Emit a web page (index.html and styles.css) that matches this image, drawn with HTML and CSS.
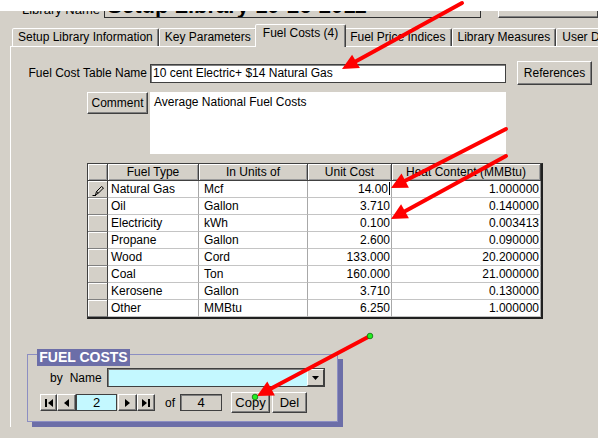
FILE: index.html
```html
<!DOCTYPE html>
<html lang="en">
<head>
<meta charset="utf-8">
<title>Fuel Costs</title>
<link rel="stylesheet" href="styles.css">
</head>
<body>
<div class="page">
  <div class="doc-top"></div>
  <div class="window">
    <div class="libname-clip">
      <div class="libname-row">
        <span class="libname-label">Library Name</span>
        <div class="libname-input">Setup Library 10-26-2011</div>
        <div class="libname-btn"></div>
      </div>
    </div>

    <div class="tabs">
      <div class="tab">Setup Library Information</div>
      <div class="tab">Key Parameters</div>
      <div class="tab active">Fuel Costs (4)</div>
      <div class="tab">Fuel Price Indices</div>
      <div class="tab">Library Measures</div>
      <div class="tab">User Defined</div>
    </div>

    <div class="panel">
      <div class="name-row">
        <span class="name-label">Fuel Cost Table Name</span>
        <div class="textbox name-box">10 cent Electric+ $14 Natural Gas</div>
        <button class="btn refs">References</button>
      </div>

      <div class="comment-row">
        <div class="comment-cell"><button class="btn comment-btn">Comment</button></div>
        <div class="comment-box">Average National Fuel Costs</div>
      </div>

      <table class="grid">
        <colgroup>
          <col class="c-sel"><col class="c-type"><col class="c-unit"><col class="c-cost"><col class="c-heat">
        </colgroup>
        <thead>
          <tr><th></th><th>Fuel Type</th><th>In Units of</th><th>Unit Cost</th><th>Heat Content (MMBtu)</th></tr>
        </thead>
        <tbody>
          <tr>
            <td class="sel"><svg class="pencil" width="13" height="11" viewBox="0 0 13 11"><path d="M0.5 10.5h3.5" stroke="#000" fill="none"/><path d="M3.5 10 4.5 6.5 9.5 1.5 11.5 3 6.5 8Z" stroke="#000" fill="none"/><path d="M4.5 6.5 6.5 8" stroke="#000"/></svg></td>
            <td class="txt">Natural Gas</td><td class="unit">Mcf</td><td class="num">14.00<span class="caret"></span></td><td class="num">1.000000</td>
          </tr>
          <tr><td class="sel"></td><td class="txt">Oil</td><td class="unit">Gallon</td><td class="num">3.710</td><td class="num">0.140000</td></tr>
          <tr><td class="sel"></td><td class="txt">Electricity</td><td class="unit">kWh</td><td class="num">0.100</td><td class="num">0.003413</td></tr>
          <tr><td class="sel"></td><td class="txt">Propane</td><td class="unit">Gallon</td><td class="num">2.600</td><td class="num">0.090000</td></tr>
          <tr><td class="sel"></td><td class="txt">Wood</td><td class="unit">Cord</td><td class="num">133.000</td><td class="num">20.200000</td></tr>
          <tr><td class="sel"></td><td class="txt">Coal</td><td class="unit">Ton</td><td class="num">160.000</td><td class="num">21.000000</td></tr>
          <tr><td class="sel"></td><td class="txt">Kerosene</td><td class="unit">Gallon</td><td class="num">3.710</td><td class="num">0.130000</td></tr>
          <tr><td class="sel"></td><td class="txt">Other</td><td class="unit">MMBtu</td><td class="num">6.250</td><td class="num">1.000000</td></tr>
        </tbody>
      </table>

      <div class="group">
        <div class="group-title">FUEL COSTS</div>
        <div class="by-row">
          <span class="by-label"><span>by</span><span class="by-name">Name</span></span>
          <div class="combo">
            <div class="combo-btn"><svg width="7" height="4" viewBox="0 0 7 4"><path d="M0 0h7L3.5 4Z" fill="#000"/></svg></div>
          </div>
        </div>
        <div class="nav-row">
          <button class="btn nav w17"><svg width="8" height="8" viewBox="0 0 8 8"><rect x="0" y="0" width="2" height="8" fill="#000"/><path d="M8 0v8L3 4Z" fill="#000"/></svg></button>
          <button class="btn nav w19"><svg width="5" height="8" viewBox="0 0 5 8"><path d="M5 0v8L0 4Z" fill="#000"/></svg></button>
          <div class="rec-box">2</div>
          <button class="btn nav w19 gap1"><svg width="5" height="8" viewBox="0 0 5 8"><path d="M0 0v8L5 4Z" fill="#000"/></svg></button>
          <button class="btn nav w18"><svg width="8" height="8" viewBox="0 0 8 8"><path d="M0 0v8L5 4Z" fill="#000"/><rect x="6" y="0" width="2" height="8" fill="#000"/></svg></button>
          <span class="of">of</span>
          <div class="count-box">4</div>
          <button class="btn copy">Copy</button>
          <button class="btn del">Del</button>
        </div>
      </div>
    </div>
  </div>

  <svg class="annot" width="598" height="438" viewBox="0 0 598 438">
    <g stroke="#ff0000" stroke-width="4" stroke-linecap="round" fill="none">
      <line x1="462" y1="3" x2="356" y2="61.3"/>
      <line x1="506" y1="129" x2="405.2" y2="180.7"/>
      <line x1="506" y1="156" x2="405" y2="211.3"/>
      <line x1="370" y1="336" x2="271.1" y2="388.5"/>
    </g>
    <g fill="#ff0000">
      <polygon points="342,69 359.9,67.9 352.1,54.7"/>
      <polygon points="391,188 408.9,187.8 401.5,173.6"/>
      <polygon points="391,219 408.9,218.3 401.1,204.3"/>
      <polygon points="257,396 274.9,395.6 267.3,381.4"/>
    </g>
    <g fill="#22ee22" stroke="#107010" stroke-width="0.8">
      <circle cx="370" cy="336" r="2.8"/>
      <circle cx="255" cy="397" r="2.8"/>
    </g>
  </svg>
</div>
</body>
</html>
```
FILE: styles.css
```css
* { box-sizing: border-box; }

html, body {
  margin: 0;
  padding: 0;
  background: #fff;
}

body {
  font-family: "Liberation Sans", Arial, sans-serif;
  font-size: 12px;
  color: #000;
}

.page {
  position: relative;
  width: 598px;
  height: 438px;
  overflow: hidden;
}

.doc-top {
  height: 11px;
  background: #fff;
}

.window {
  height: 427px;
  background: #d4d0c8;
  padding-left: 10px;
  overflow: hidden;
}

/* library name strip, only its lower edge shows */
.libname-clip {
  height: 7px;
  overflow: hidden;
}

.libname-row {
  display: flex;
  align-items: flex-end;
  height: 26px;
  margin-top: -19px;
  white-space: nowrap;
}

.libname-label {
  width: 100px;
  padding-left: 12px;
  margin-bottom: 1px;
  font-size: 13px;
  line-height: 15px;
  overflow: hidden;
}

.libname-input {
  width: 403px;
  height: 26px;
  padding: 2px 0 0 2px;
  border: 1px solid #303030;
  background: #d4d0c8;
  font-size: 22px;
  font-weight: bold;
  line-height: 22px;
  overflow: hidden;
}

.libname-btn {
  flex: none;
  width: 100px;
  height: 26px;
  margin-left: 17px;
  border: 1px solid;
  border-color: #fff #404040 #404040 #fff;
  box-shadow: inset 0 -1px 0 #808080;
}

/* tab strip */
.tabs {
  display: flex;
  align-items: flex-end;
  height: 22px;
  margin: 6px 0 0 2px;
  white-space: nowrap;
}

.tab {
  flex: none;
  height: 18px;
  padding: 0 5px;
  line-height: 16px;
  border: 1px solid;
  border-bottom: 0;
  border-color: #fff #404040 transparent #fff;
  border-radius: 2px 2px 0 0;
  box-shadow: inset -1px 0 0 #808080;
  background: #d4d0c8;
}

.tab.active {
  position: relative;
  z-index: 1;
  height: 23px;
  margin: 0 -2px -1px;
  padding: 0 7px;
}

.panel {
  height: 381px;
  border-top: 1px solid #fff;
  border-left: 1px solid #fff;
}

/* buttons and fields */
.btn {
  display: flex;
  align-items: center;
  justify-content: center;
  flex: none;
  padding: 0;
  margin: 0;
  font: inherit;
  color: #000;
  background: #d4d0c8;
  border: 1px solid;
  border-color: #fff #404040 #404040 #fff;
  box-shadow: inset -1px -1px 0 #808080;
}

.textbox {
  background: #fff;
  border: 1px solid #404040;
  box-shadow: inset 1px 1px 0 #808080;
}

.name-row {
  display: flex;
  align-items: center;
  height: 24px;
  margin-top: 14px;
}

.name-label {
  width: 139px;
  padding-right: 3px;
  text-align: right;
  white-space: nowrap;
}

.name-box {
  width: 356px;
  height: 19px;
  padding-left: 2px;
  line-height: 17px;
  white-space: nowrap;
}

.refs {
  width: 75px;
  height: 24px;
  margin-left: 11px;
}

.comment-row {
  display: flex;
  margin-top: 7px;
}

.comment-cell {
  display: flex;
  justify-content: flex-end;
  width: 139px;
  padding-right: 2px;
}

.comment-btn {
  width: 61px;
  height: 22px;
}

.comment-box {
  width: 356px;
  height: 62px;
  padding: 3px 4px;
  line-height: 14px;
  background: #fff;
}

/* fuel grid */
.grid {
  margin: 9px 0 0 76px;
  width: 456px;
  table-layout: fixed;
  border-collapse: separate;
  border-spacing: 0;
  border-top: 1px solid #404040;
  border-left: 1px solid #404040;
  border-right: 2px solid #202020;
  border-bottom: 2px solid #202020;
}

.c-sel { width: 20px; }
.c-type { width: 91px; }
.c-unit { width: 109px; }
.c-cost { width: 84px; }
.c-heat { width: 149px; }

.grid th {
  padding: 0;
  font-weight: normal;
  line-height: 16px;
  text-align: center;
  white-space: nowrap;
  overflow: hidden;
  background: #d4d0c8;
  border-right: 1px solid #404040;
  border-bottom: 1px solid #404040;
  box-shadow: inset 1px 1px 0 #fff, inset -1px -1px 0 #9a9a9a;
}

.grid td {
  padding: 0 3px;
  line-height: 16px;
  white-space: nowrap;
  overflow: hidden;
  background: #fff;
  border-right: 1px solid #a8a8a8;
  border-bottom: 1px solid #c4c4c4;
}

.grid td.sel {
  padding: 0;
  text-align: center;
  background: #d4d0c8;
  border-right: 1px solid #404040;
  border-bottom: 1px solid #808080;
  box-shadow: inset 1px 1px 0 #fff;
}

.pencil {
  display: block;
  margin: 2px 0 0 4px;
}

.grid td.unit { padding-left: 5px; }

.grid td.num {
  padding: 0 1px 0 0;
  text-align: right;
}

.caret {
  display: inline-block;
  width: 1px;
  height: 13px;
  margin-left: 1px;
  vertical-align: -2px;
  background: #000;
}

/* record navigator group */
.group {
  display: flex;
  flex-direction: column;
  align-items: flex-start;
  width: 311px;
  height: 68px;
  margin: 35px 0 0 16px;
  border: 1px solid #8c8ec2;
  box-shadow: 5px 5px 0 #6c6ea8;
}

.group-title {
  width: 93px;
  height: 17px;
  margin: -6px 0 0 9px;
  text-align: center;
  font-size: 14px;
  font-weight: bold;
  line-height: 17px;
  color: #fff;
  background: #6c6ea8;
  white-space: nowrap;
}

.by-row {
  display: flex;
  align-items: center;
  height: 19px;
  margin: 2px 0 0 22px;
}

.by-label {
  width: 57px;
  white-space: nowrap;
}

.by-name { margin-left: 7px; }

.combo {
  display: flex;
  justify-content: flex-end;
  width: 218px;
  height: 19px;
  background: #c4f8ff;
  border: 1px solid #404040;
  box-shadow: inset 1px 1px 0 #808080;
}

.combo-btn {
  display: flex;
  align-items: center;
  justify-content: center;
  width: 17px;
  height: 17px;
  background: #d4d0c8;
  border: 1px solid;
  border-color: #fff #404040 #404040 #fff;
}

.nav-row {
  display: flex;
  align-items: center;
  height: 21px;
  margin: 5px 0 0 12px;
}

.nav { height: 17px; }
.w17 { width: 17px; }
.w18 { width: 18px; }
.w19 { width: 19px; }
.gap1 { margin-left: 1px; }

.rec-box {
  width: 41px;
  height: 17px;
  line-height: 15px;
  text-align: center;
  font-size: 13px;
  background: #c4f8ff;
  border: 1px solid #404040;
}

.of {
  margin-left: 10px;
  width: 15px;
}

.count-box {
  width: 42px;
  height: 17px;
  line-height: 15px;
  text-align: center;
  font-size: 13px;
  border: 1px solid #404040;
  box-shadow: inset 1px 1px 0 #808080;
}

.copy {
  width: 39px;
  height: 21px;
  margin-left: 9px;
  font-size: 13px;
}

.del {
  width: 35px;
  height: 21px;
  margin-left: 2px;
  font-size: 13px;
}

/* annotation arrows drawn over the form */
.annot {
  position: absolute;
  left: 0;
  top: 0;
  pointer-events: none;
}
```
